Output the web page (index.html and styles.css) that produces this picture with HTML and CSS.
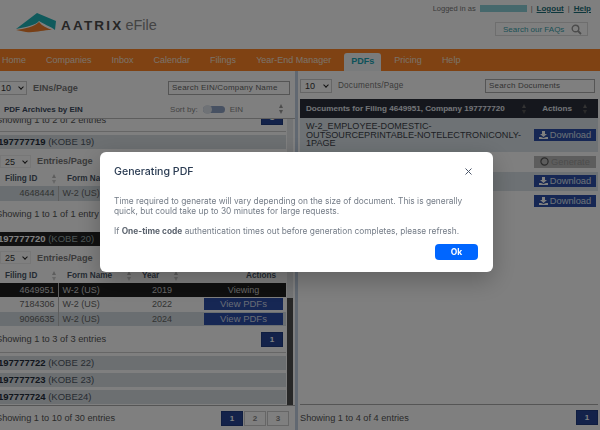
FILE: index.html
```html
<!DOCTYPE html>
<html lang="en">

<head>
    <meta charset="UTF-8">
    <meta name="viewport" content="width=device-width, initial-scale=1.0">
    <title>Aatrix eFile - PDFs</title>
    <link rel="stylesheet" href="styles.css">
</head>

<body>
    <div class="page">
        <header class="top">
            <div class="logo">
                <svg width="44" height="24" viewBox="0 0 44 24">
                    <path d="M2 17 L23 1 L42 9 L41 18 C36 14 29 12 25 9 C22 13 12 15 2 17 Z" fill="#1fb4b8"/>
                    <path d="M2 18 C10 17 20 15 25 10 C28 14 33 16 38 18 C28 18 22 21 12 20 Z" fill="#f07f2c"/>
                </svg>
                <span class="logo-name">AATRIX</span>
                <span class="logo-sub">eFile</span>
            </div>
            <div class="top-right">
                <div class="account">
                    <span>Logged in as</span>
                    <span class="account-name"></span>
                    <span class="sep">|</span>
                    <a>Logout</a>
                    <span class="sep">|</span>
                    <a>Help</a>
                </div>
                <div class="faq">
                    <span>Search our FAQs</span>
                    <svg width="11" height="11" viewBox="0 0 11 11">
                        <circle cx="4.5" cy="4.5" r="3.3" fill="none" stroke="#999" stroke-width="1.4"/>
                        <path d="M7 7 L10 10" stroke="#999" stroke-width="1.8"/>
                    </svg>
                </div>
            </div>
        </header>

        <nav class="nav">
            <a>Home</a>
            <a>Companies</a>
            <a>Inbox</a>
            <a>Calendar</a>
            <a>Filings</a>
            <a>Year-End Manager</a>
            <a class="active">PDFs</a>
            <a>Pricing</a>
            <a>Help</a>
        </nav>

        <main class="content">
            <section class="left">
                <div class="left-inner">
                    <div class="tools left-tools">
                        <div class="select">10</div>
                        <span class="label">EINs/Page</span>
                        <div class="search search-ein">Search EIN/Company Name</div>
                    </div>
                    <div class="archive-head">
                        <b>PDF Archives by EIN</b>
                        <span class="sort">Sort by:</span>
                        <span class="toggle"></span>
                        <span class="sort">EIN</span>
                        <span class="arrows tall"></span>
                    </div>
                    <div class="archive">
                        <div class="archive-list">
                            <div class="cut-row">
                                <span>Showing 1 to 2 of 2 entries</span>
                                <span class="page-btn on small">1</span>
                            </div>
                            <div class="company"><b>197777719</b> (KOBE 19)</div>
                            <div class="tools inner-tools">
                                <div class="select sm">25</div>
                                <span class="label">Entries/Page</span>
                            </div>
                            <table class="filings">
                                <tr><th class="id">Filing ID<span class="arrows"></span></th><th class="form">Form Name<span class="arrows"></span></th><th class="year">Year<span class="arrows"></span></th><th class="act">Actions</th></tr>
                                <tr class="alt"><td class="id">4648444</td><td>W-2 (US)</td><td class="year">2018</td><td class="act"></td></tr>
                            </table>
                            <div class="showing one">Showing 1 to 1 of 1 entry</div>
                            <div class="company dark"><b>197777720</b> (KOBE 20)</div>
                            <div class="tools inner-tools">
                                <div class="select sm">25</div>
                                <span class="label">Entries/Page</span>
                            </div>
                            <table class="filings">
                                <tr><th class="id">Filing ID<span class="arrows"></span></th><th class="form">Form Name<span class="arrows"></span></th><th class="year">Year<span class="arrows"></span></th><th class="act">Actions</th></tr>
                                <tr class="viewing"><td class="id">4649951</td><td>W-2 (US)</td><td class="year">2019</td><td class="act">Viewing</td></tr>
                                <tr><td class="id">7184306</td><td>W-2 (US)</td><td class="year">2022</td><td class="act"><span class="view-btn">View PDFs</span></td></tr>
                                <tr class="alt"><td class="id">9096635</td><td>W-2 (US)</td><td class="year">2024</td><td class="act"><span class="view-btn">View PDFs</span></td></tr>
                            </table>
                            <div class="cut-row last">
                                <span>Showing 1 to 3 of 3 entries</span>
                                <span class="page-btn on small">1</span>
                            </div>
                            <div class="company"><b>197777722</b> (KOBE 22)</div>
                            <div class="company"><b>197777723</b> (KOBE 23)</div>
                            <div class="company"><b>197777724</b> (KOBE24)</div>
                        </div>
                        <div class="scrollbar"><div class="thumb"></div></div>
                    </div>
                    <div class="foot">
                        <span>Showing 1 to 10 of 30 entries</span>
                        <div class="pages">
                            <span class="page-btn on">1</span>
                            <span class="page-btn">2</span>
                            <span class="page-btn">3</span>
                        </div>
                    </div>
                </div>
            </section>

            <div class="divider"></div>

            <section class="right">
                <div class="tools right-tools">
                    <div class="select wide">10</div>
                    <span class="label">Documents/Page</span>
                    <div class="search search-docs">Search Documents</div>
                </div>
                <div class="docs">
                    <div class="docs-head">
                        <span>Documents for Filing 4649951, Company 197777720</span>
                        <span class="arrows"></span>
                        <span class="docs-actions">Actions</span>
                        <span class="arrows"></span>
                    </div>
                    <div class="doc doc-first">
                        <span class="doc-name">W-2_EMPLOYEE-DOMESTIC-OUTSOURCEPRINTABLE-NOTELECTRONICONLY-1PAGE</span>
                        <span class="dl">
                            <svg width="9" height="8" viewBox="0 0 9 8"><path d="M3 0 H6 V3 H8 L4.5 6 L1 3 H3 Z M0 6 H2 L4.5 7 L7 6 H9 V8 H0 Z" fill="#fff"/></svg>
                            Download
                        </span>
                    </div>
                    <div class="doc">
                        <span class="doc-name"></span>
                        <span class="dl gen">
                            <svg width="9" height="9" viewBox="0 0 9 9"><circle cx="4.5" cy="4.5" r="3.6" fill="none" stroke="#555" stroke-width="1.2"/></svg>
                            Generate
                        </span>
                    </div>
                    <div class="doc band">
                        <span class="doc-name"></span>
                        <span class="dl">
                            <svg width="9" height="8" viewBox="0 0 9 8"><path d="M3 0 H6 V3 H8 L4.5 6 L1 3 H3 Z M0 6 H2 L4.5 7 L7 6 H9 V8 H0 Z" fill="#fff"/></svg>
                            Download
                        </span>
                    </div>
                    <div class="doc">
                        <span class="doc-name"></span>
                        <span class="dl">
                            <svg width="9" height="8" viewBox="0 0 9 8"><path d="M3 0 H6 V3 H8 L4.5 6 L1 3 H3 Z M0 6 H2 L4.5 7 L7 6 H9 V8 H0 Z" fill="#fff"/></svg>
                            Download
                        </span>
                    </div>
                </div>
                <div class="foot right-foot">
                    <span>Showing 1 to 4 of 4 entries</span>
                    <span class="page-btn on">1</span>
                </div>
            </section>
        </main>
    </div>

    <div class="overlay">
        <div class="modal">
            <div class="modal-head">
                <h2>Generating PDF</h2>
                <svg width="7" height="7" viewBox="0 0 7 7"><path d="M.5 .5 L6.5 6.5 M6.5 .5 L.5 6.5" stroke="#4a5568" stroke-width="1"/></svg>
            </div>
            <p>Time required to generate will vary depending on the size of document. This is generally quick, but could take up to 30 minutes for large requests.</p>
            <p>If <b>One-time code</b> authentication times out before generation completes, please refresh.</p>
            <div class="modal-foot"><button>Ok</button></div>
        </div>
    </div>
</body>

</html>
```

FILE: styles.css
```css
* {
    box-sizing: border-box;
    padding: 0;
    margin: 0;
}

html,
body {
    height: 100%;
    overflow: hidden;
}

body {
    font-family: "Liberation Sans", Arial, sans-serif;
    font-size: 9.5px;
    color: #333;
    background: #fff;
}

.page {
    height: 430px;
    display: flex;
    flex-direction: column;
}

/* header */
.top {
    height: 49px;
    display: flex;
    justify-content: space-between;
    padding: 12px 9px 0 14px;
}

.logo {
    display: flex;
    align-items: flex-start;
    height: 24px;
}

.logo-name {
    font-weight: bold;
    font-size: 13.5px;
    letter-spacing: 2.2px;
    color: #4c4c4c;
    margin: 6px 0 0 3px;
}

.logo-sub {
    font-size: 14.5px;
    color: #888;
    margin: 5px 0 0 2px;
}

.top-right {
    margin-top: -12px;
    display: flex;
    flex-direction: column;
    align-items: flex-end;
}

.account {
    display: flex;
    align-items: center;
    gap: 4px;
    font-size: 7.5px;
    height: 16px;
    color: #777;
}

.account-name {
    width: 47px;
    height: 7px;
    background: #8cd0d8;
}

.account a {
    color: #1b6e78;
    font-size: 8px;
    font-weight: bold;
    text-decoration: underline;
}

.faq {
    width: 93px;
    height: 14px;
    margin: 6px 3px 0 0;
    border: 1px solid #ddd;
    display: flex;
    align-items: center;
    justify-content: space-between;
    padding: 0 5px 0 7px;
    font-size: 8px;
    color: #3aa3ad;
}

/* nav */
.nav {
    height: 22px;
    background: #ff8527;
    display: flex;
    align-items: flex-end;
    gap: 20px;
    padding-left: 2px;
    color: #fff;
    flex: none;
}

.nav a {
    height: 22px;
    line-height: 22px;
    font-size: 9px;
    color: #f6e3d3;
}

.nav .active {
    height: 18px;
    line-height: 17px;
    background: #f3f6f8;
    color: #1aa5b5;
    font-weight: bold;
    padding: 0 7px;
    margin: 0 -7px;
    border-radius: 3px 3px 0 0;
}

/* panels */
.content {
    flex: 1;
    display: flex;
    min-height: 0;
}

.left {
    width: 295px;
    overflow: hidden;
    flex: none;
}

.left-inner {
    width: 299px;
    margin-left: -4px;
    height: 100%;
    display: flex;
    flex-direction: column;
}

.divider {
    width: 3px;
    background: #c2d0e2;
    flex: none;
}

.right {
    flex: 1;
    min-width: 0;
    padding: 0 2px 0 2px;
    display: flex;
    flex-direction: column;
}

.tools {
    display: flex;
    align-items: center;
}

.left-tools {
    height: 29px;
    padding: 4px 5px 0 0;
}

.right-tools {
    height: 28px;
    padding: 1px 3px 0 0;
}

.select {
    width: 31px;
    height: 14px;
    border: 1px solid #ccc;
    background: #fff;
    font-size: 9px;
    line-height: 12px;
    padding-left: 4px;
    position: relative;
}

.select::after {
    content: "";
    position: absolute;
    right: 3px;
    top: 3px;
    width: 3px;
    height: 3px;
    border-right: 1px solid #222;
    border-bottom: 1px solid #222;
    transform: rotate(45deg);
}

.select.wide {
    width: 32px;
}

.select.sm {
    width: 31px;
    height: 13px;
    border-color: #eee;
}

.label {
    margin-left: 6px;
    font-size: 9.2px;
    font-weight: bold;
    color: #777;
}

.right-tools .label {
    font-weight: normal;
    font-size: 8.2px;
    letter-spacing: .2px;
}

.search {
    margin-left: auto;
    height: 14px;
    border: 1px solid #aaa;
    font-size: 8px;
    line-height: 12px;
    padding-left: 3px;
    color: #666;
    letter-spacing: .2px;
}

.search-ein {
    width: 122px;
}

.search-docs {
    width: 110px;
}

.archive-head {
    height: 19px;
    display: flex;
    align-items: center;
    padding: 0 11px 0 8px;
    border-bottom: 1px solid #bbb;
    font-size: 8px;
    color: #888;
}

.archive-head b {
    color: #3b4a5e;
    font-size: 8px;
    margin-right: auto;
}

.toggle {
    width: 22px;
    height: 7px;
    border-radius: 4px;
    background: #8ea2c4;
    margin: 0 5px;
    position: relative;
}

.toggle::before {
    content: "";
    position: absolute;
    left: 0;
    top: -1px;
    width: 9px;
    height: 9px;
    border-radius: 50%;
    background: #dfe4ec;
}

.arrows {
    display: inline-block;
    width: 5px;
    height: 10px;
    position: relative;
    flex: none;
    vertical-align: middle;
}

.arrows::before,
.arrows::after {
    content: "";
    position: absolute;
    left: 0;
    border-left: 2.5px solid transparent;
    border-right: 2.5px solid transparent;
}

.arrows::before {
    top: 0;
    border-bottom: 4px solid #999;
}

.arrows::after {
    bottom: 0;
    border-top: 4px solid #999;
}

.arrows.tall {
    margin-left: 36px;
}

.archive {
    height: 287px;
    display: flex;
    flex: none;
    border-bottom: 1px solid #aaa;
    position: relative;
}

.archive-list {
    width: 290px;
    height: 100%;
    overflow: hidden;
    flex: none;
}

.scrollbar {
    width: 6px;
    margin-left: 1px;
    height: 100%;
    background: #e6e8ea;
}

.thumb {
    margin-top: 179px;
    height: 107px;
    background: #4e4e4e;
}

.cut-row {
    height: 13px;
    display: flex;
    justify-content: space-between;
    align-items: flex-start;
    border-bottom: 1px solid #ccc;
    font-size: 9.3px;
    color: #555;
    line-height: 2px;
    overflow: hidden;
    padding-right: 3px;
}

.cut-row .page-btn {
    margin-top: -9px;
}

.cut-row.last {
    line-height: 15px;
    height: 26.5px;
    padding-top: 6px;
}

.cut-row.last .page-btn {
    margin-top: 0;
}

.company {
    height: 14px;
    line-height: 14px;
    margin: 3px 0;
    background: #d8dee2;
    font-size: 9.5px;
    color: #4f5965;
    padding-left: 2px;
}

.company b {
    color: #222c3a;
}

.company.dark {
    background: #222;
    color: #9aa;
    margin: 0 0 3px;
}

.company.dark b {
    color: #fff;
}

.inner-tools {
    height: 18px;
    margin-bottom: 2px;
    padding-left: 4px;
}

.filings {
    border-collapse: collapse;
    width: 290px;
    font-size: 9px;
    table-layout: fixed;
}

.filings th {
    height: 14px;
    font-size: 8.2px;
    text-align: left;
    color: #4a5666;
    padding-left: 9px;
    white-space: nowrap;
}

.filings th .arrows {
    margin-left: 15px;
}

.filings th .arrows::before {
    border-bottom-color: #bbb;
}

.filings th .arrows::after {
    border-top-color: #ccc;
}

.filings td {
    height: 14.5px;
    padding: 0 4px;
    color: #666;
}

.filings td:first-child {
    border-right: 1px solid #bbb;
}

.filings .id {
    width: 62px;
}

.filings td.id {
    text-align: right;
    padding-right: 3px;
}

.filings .form {
    width: 84px;
}

.filings th.year {
    width: 58px;
    padding-left: 0;
}

.filings td.year {
    padding-left: 10px;
}

.filings td.act {
    text-align: center;
    padding: 0 3px 0 4px;
}

.filings th.act {
    text-align: right;
    padding: 0 10px 0 0;
}

.filings .alt td {
    background: #d4dde2;
}

.filings .viewing td {
    background: #1f1f1f;
    color: #ccc;
}

.view-btn {
    display: block;
    height: 12px;
    line-height: 12px;
    font-size: 9.5px;
    background: #2c4ea8;
    color: #cfd8ea;
    text-align: center;
}

.showing {
    font-size: 9.3px;
    color: #555;
}

.showing.one {
    height: 31px;
    line-height: 26px;
}

.page-btn {
    display: inline-block;
    width: 22px;
    height: 15px;
    line-height: 14px;
    text-align: center;
    border: 1px solid #ccc;
    font-size: 8px;
    font-weight: bold;
    color: #888;
}

.page-btn.on {
    background: #264494;
    border-color: #1f3a80;
    color: #fff;
}

.foot {
    flex: 1;
    display: flex;
    justify-content: space-between;
    align-items: center;
    padding: 0 6px 0 0;
    font-size: 9.2px;
    color: #555;
}

.pages {
    display: flex;
    gap: 1px;
}

.docs {
    flex: 1;
    min-height: 0;
    border-bottom: 1px solid #aaa;
}

.docs-head {
    height: 19px;
    background: #2a2f3a;
    color: #e4e8ef;
    font-size: 8.1px;
    font-weight: bold;
    display: flex;
    align-items: center;
    padding: 0 10px 0 6px;
    white-space: nowrap;
}

.docs-head span:first-child {
    width: 218px;
}

.docs-head .arrows::before {
    border-bottom-color: #666;
}

.docs-head .arrows::after {
    border-top-color: #555;
}

.docs-actions {
    margin: 0 11px 0 15px;
    width: 30px;
}

.doc {
    display: flex;
    justify-content: space-between;
    align-items: center;
    height: 19.5px;
    padding: 0 2px 0 6px;
}

.doc-first {
    height: 34px;
    background: #dce5ea;
}

.doc-first .doc-name {
    width: 222px;
    font-size: 9.1px;
    line-height: 8.5px;
    color: #3b4048;
}

.band {
    background: #dbe3e8;
}

.dl {
    width: 62px;
    height: 12px;
    background: #2c4ea8;
    color: #dbe3ef;
    font-size: 9.3px;
    line-height: 12px;
    display: flex;
    align-items: center;
    justify-content: center;
    gap: 2px;
    flex: none;
}

.dl.gen {
    background: #bbb;
    color: #999;
}

.right-foot {
    flex: none;
    height: 25px;
    padding: 0;
}

/* modal */
.overlay {
    position: fixed;
    inset: 0;
    background: rgba(0, 0, 0, .5);
    backdrop-filter: blur(.5px);
    display: flex;
    align-items: flex-start;
    padding: 152px 0 0 100px;
}

.modal {
    width: 393px;
    height: 120px;
    background: #fff;
    border-radius: 6px;
    padding: 13px 15px 0 14px;
    font-family: Inter, "Liberation Sans", sans-serif;
    font-size: 8.35px;
    line-height: 10px;
    color: #747c87;
    box-shadow: 0 8px 24px rgba(0, 0, 0, .25);
}

.modal-head {
    display: flex;
    justify-content: space-between;
    align-items: center;
    height: 13px;
    padding-right: 6px;
    margin-bottom: 18px;
}

.modal h2 {
    font-size: 10.6px;
    font-weight: 500;
    color: #2a3b52;
}

.modal p {
    margin-bottom: 10px;
}

.modal p:last-of-type {
    margin-bottom: 8px;
}

.modal b {
    color: #5b636e;
    font-weight: 700;
}

.modal-foot {
    display: flex;
    justify-content: flex-end;
}

button {
    width: 43px;
    height: 16px;
    border: 0;
    border-radius: 4px;
    background: #0066ff;
    color: #fff;
    font-family: Inter, "Liberation Sans", sans-serif;
    font-size: 8.5px;
    font-weight: 700;
}
```
